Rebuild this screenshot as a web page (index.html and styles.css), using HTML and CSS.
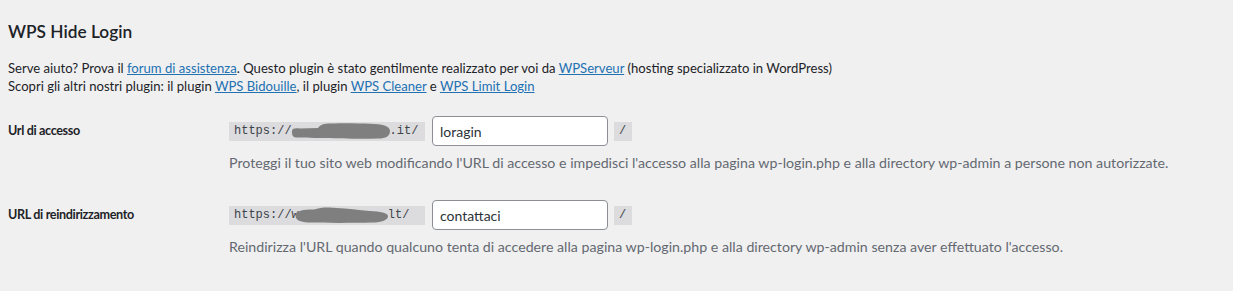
FILE: index.html
```html
<!DOCTYPE html>
<html lang="it">
<head>
<meta charset="utf-8">
<title>WPS Hide Login</title>
<link rel="stylesheet" href="styles.css">
</head>
<body>
<div class="wrap">
  <h2 class="title">WPS Hide Login</h2>
  <p class="intro">Serve aiuto? Prova il <a href="#">forum di assistenza</a>. Questo plugin è stato gentilmente realizzato per voi da <a href="#">WPServeur</a> (hosting specializzato in WordPress)<br>Scopri gli altri nostri plugin: il plugin <a href="#">WPS Bidouille</a>, il plugin <a href="#">WPS Cleaner</a> e <a href="#">WPS Limit Login</a></p>

  <div class="form-table">
    <div class="form-row">
      <div class="label">Url di accesso</div>
      <div class="field">
        <div class="controls">
          <code class="prefix">https://<span class="blur"><svg width="100" height="16" viewBox="0 0 100 16"><path d="M2 8 C2 5 6 5 10 5.5 L28 5 C30 1 36 0 44 0.5 C56 0 70 0.5 80 0.8 C92 1 100 3 100 8 C100 13 96 15.5 88 15.5 C70 16 50 15.5 36 15 C26 15 14 14.8 6 14.5 C2 14 2 11 2 8 Z" fill="#7f7f7f"/></svg></span>.it/</code>
          <input class="text" type="text" value="loragin">
          <code class="suffix">/</code>
        </div>
        <p class="description">Proteggi il tuo sito web modificando l'URL di accesso e impedisci l'accesso alla pagina wp-login.php e alla directory wp-admin a persone non autorizzate.</p>
      </div>
    </div>
    <div class="form-row">
      <div class="label">URL di reindirizzamento</div>
      <div class="field">
        <div class="controls">
          <code class="prefix">https://w<span class="blur blur2"><svg width="92" height="16" viewBox="0 0 92 16"><path d="M0 6 C4 3 10 2 18 2.5 C24 0 34 0 40 1 C52 1.5 62 3 74 4 C84 4.5 92 6 92 9 C92 13 86 15.5 76 15.5 C56 16 30 16 12 15.5 C4 15 0 13 0 10 Z" fill="#7f7f7f"/></svg></span>lt/</code>
          <input class="text" type="text" value="contattaci">
          <code class="suffix">/</code>
        </div>
        <p class="description">Reindirizza l'URL quando qualcuno tenta di accedere alla pagina wp-login.php e alla directory wp-admin senza aver effettuato l'accesso.</p>
      </div>
    </div>
  </div>
</div>
</body>
</html>
```
FILE: styles.css
```css
html, body {
  margin: 0;
  padding: 0;
}
body {
  background: #f0f0f1;
  color: #1d2327;
  font-family: Lato, "Noto Sans", sans-serif;
  font-size: 13px;
  line-height: 1.4;
}
.wrap {
  padding: 0 8px;
}
.title {
  font-size: 17.3px;
  font-weight: 600;
  margin: 0;
  padding-top: 21px;
  line-height: 22px;
  color: #1d2327;
}
.intro {
  margin: 16px 0 0 0;
  font-size: 13.1px;
  line-height: 18px;
}
a {
  color: #2271b1;
  text-decoration: underline;
}
.form-table {
  margin-top: 7px;
}
.form-row {
  display: grid;
  grid-template-columns: 221px 1fr;
  padding: 14px 0 22px;
}
.form-row + .form-row {
  padding-top: 6px;
}
.label {
  font-weight: 700;
  font-size: 12.6px;
  letter-spacing: -0.35px;
  padding-top: 6px;
  line-height: 18px;
}
.controls {
  display: flex;
  align-items: center;
  gap: 7px;
}
code {
  font-family: "Liberation Mono", "DejaVu Sans Mono", monospace;
  font-size: 12px;
  background: #dcdcde;
  color: #3c434a;
  padding: 0 5px;
  height: 19px;
  line-height: 19px;
  display: inline-flex;
  align-items: center;
}
.prefix {
  width: 186px;
}
.blur {
  display: inline-flex;
  width: 100px;
  height: 16px;
  margin: 0 0 0 -2px;
}
.blur2 {
  width: 92px;
  margin-left: -3px;
}
.suffix {
  margin-left: -1px;
  width: 8px;
}
.text {
  box-sizing: border-box;
  width: 176px;
  height: 30px;
  border: 1px solid #8c8f94;
  border-radius: 4px;
  background: #fff;
  padding: 0 7px;
  font-family: Lato, "Noto Sans", sans-serif;
  font-size: 14px;
  color: #2c3338;
  outline: none;
}
.description {
  margin: 7px 0 0 0;
  color: #646970;
  font-size: 14.2px;
  line-height: 19px;
}
```
